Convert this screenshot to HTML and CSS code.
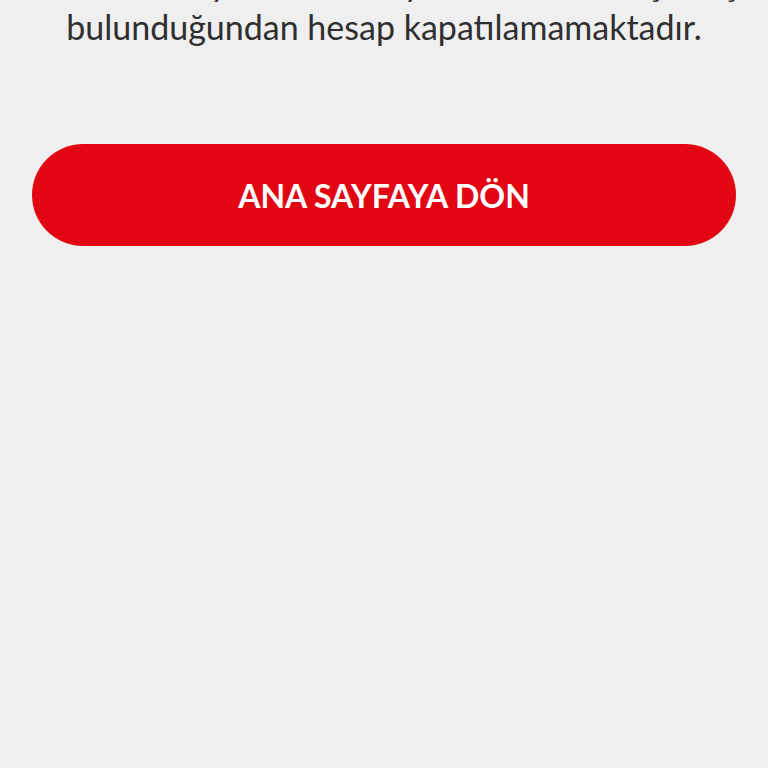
FILE: index.html
```html
<!DOCTYPE html>
<html lang="tr">
<head>
  <meta charset="UTF-8">
  <meta name="viewport" content="width=device-width, initial-scale=1.0">
  <title>Hesap Kapatma</title>
  <link rel="stylesheet" href="styles.css">
</head>
<body>

  <!-- Result message -->
  <div class="result">
    <p class="result-text">Üzerinize kayıtlı aktif hat ya da ödenmemiş borç<br>bulunduğundan hesap kapatılamamaktadır.</p>
  </div>

  <!-- Actions -->
  <div class="actions">
    <button class="home-btn">ANA SAYFAYA DÖN</button>
  </div>

</body>
</html>
```

FILE: styles.css
```css
body {
  background-color: #efefef;
  color: #2f2f2f;
  font-family: Lato, "Open Sans", sans-serif;
  margin: 0;
  padding: 0;
}

.result {
  padding: 0 20px;
  margin-top: -39px;
  text-align: center;
}

.result-text {
  font-size: 34px;
  line-height: 44px;
  margin: 0;
  white-space: nowrap;
}

.actions {
  padding: 0 32px;
  margin-top: 95px;
}

.home-btn {
  display: block;
  width: 100%;
  height: 102px;
  background-color: #e20613;
  border: none;
  border-radius: 51px;
  color: white;
  font-family: Lato, "Open Sans", sans-serif;
  font-weight: bold;
  font-size: 32px;
  cursor: pointer;
}
```
